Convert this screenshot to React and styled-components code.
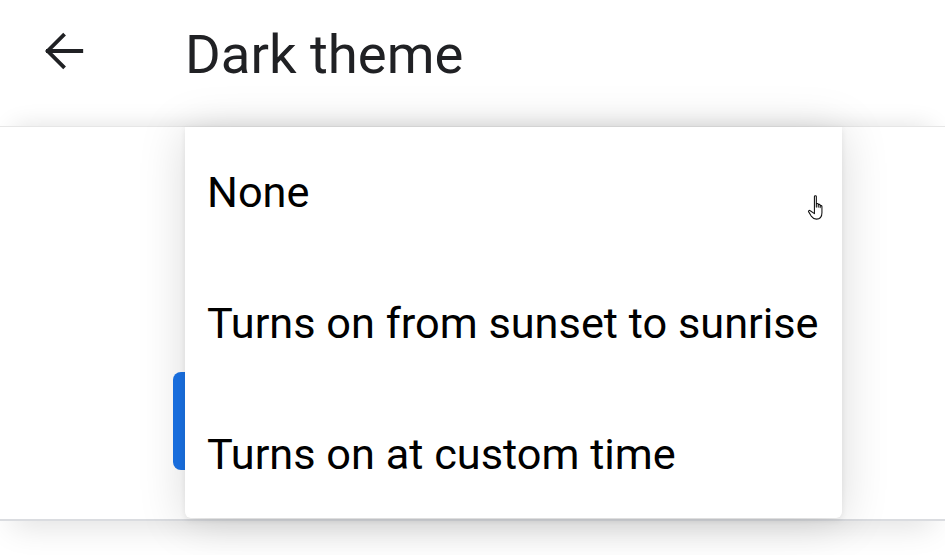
import React from 'react';
import styled, { createGlobalStyle } from 'styled-components';

const Global = createGlobalStyle`
  html, body { margin: 0; padding: 0; background: #fff; }
  body { font-family: Roboto, "Noto Sans", sans-serif; overflow: hidden; }
`;

const Page = styled.div`
  position: relative;
  width: 945px;
  height: 555px;
  background: #fff;
  overflow: hidden;
`;

const Header = styled.header`
  height: 126px;
  display: flex;
  align-items: flex-start;
  padding-top: 26px;
  box-sizing: border-box;
`;

const BackButton = styled.button`
  width: 50px;
  height: 50px;
  margin-left: 39px;
  margin-right: 96px;
  padding: 0;
  border: none;
  background: none;
  display: flex;
  align-items: center;
  justify-content: center;
  color: #202124;
`;

const Title = styled.h1`
  margin: 0;
  margin-top: -4px;
  font: 400 54.5px Roboto, sans-serif;
  line-height: 64px;
  color: #202124;
  letter-spacing: 0;
`;

const Panel = styled.section`
  position: relative;
  height: 395px;
  border-top: 1px solid #e6e6e6;
  border-bottom: 2px solid #dadce0;
  box-shadow: 0 -12px 24px -14px rgba(0, 0, 0, 0.14), 0 18px 30px -12px rgba(0, 0, 0, 0.12);
  background: #fff;
  display: flex;
  flex-direction: column;
  padding-top: 245px;
  box-sizing: border-box;
`;

const Indicator = styled.div`
  width: 24px;
  height: 98px;
  margin-left: 173px;
  background: #1a73e8;
  border-radius: 8px 0 0 8px;
`;

const Menu = styled.ul`
  position: absolute;
  left: 185px;
  top: 127px;
  width: 657px;
  height: 391px;
  margin: 0;
  padding: 0;
  list-style: none;
  background: #fff;
  border-radius: 0 0 6px 6px;
  box-shadow: 0 4px 48px rgba(0, 0, 0, 0.15), 0 2px 6px rgba(0, 0, 0, 0.08);
  display: flex;
  flex-direction: column;
  box-sizing: border-box;
`;

const Item = styled.li`
  height: 131px;
  flex: none;
  display: flex;
  align-items: center;
  padding-left: 22px;
  font: 400 43.3px Roboto, sans-serif;
  color: #000;
  line-height: 1;
`;

const Cursor = styled.svg`
  position: absolute;
  left: 806px;
  top: 194px;
`;

const ArrowBack = () => (
  <svg width="46" height="46" viewBox="0 0 24 24" fill="none">
    <path d="M21 12H3.6M11.6 3.9L3.5 12l8.1 8.1" stroke="#202124" strokeWidth="2" strokeLinecap="square" />
  </svg>
);

const options = ['None', 'Turns on from sunset to sunrise', 'Turns on at custom time'];

export default function App() {
  return (
    <Page>
      <Global />
      <Header>
        <BackButton aria-label="Back">
          <ArrowBack />
        </BackButton>
        <Title>Dark theme</Title>
      </Header>
      <Panel>
        <Indicator />
      </Panel>
      <Menu>
        {options.map((o) => (
          <Item key={o}>{o}</Item>
        ))}
      </Menu>
      <Cursor width="24" height="31" viewBox="0 0 20 26">
        <path
          d="M7 2.2c0-.9 1.6-.9 1.6 0V11V8.6c0-.9 1.6-.9 1.6 0V11V9.4c0-.9 1.6-.9 1.6 0v2v-1c0-.9 1.5-.9 1.5 0v5.4c0 3.2-1.8 5.3-4.6 5.3c-2 0-3.1-.9-4.4-2.6L2.2 15c-.6-.8.5-1.7 1.3-1L7 16.5Z"
          fill="#fff"
          stroke="#111"
          strokeWidth="0.9"
          strokeLinejoin="round"
        />
      </Cursor>
    </Page>
  );
}
